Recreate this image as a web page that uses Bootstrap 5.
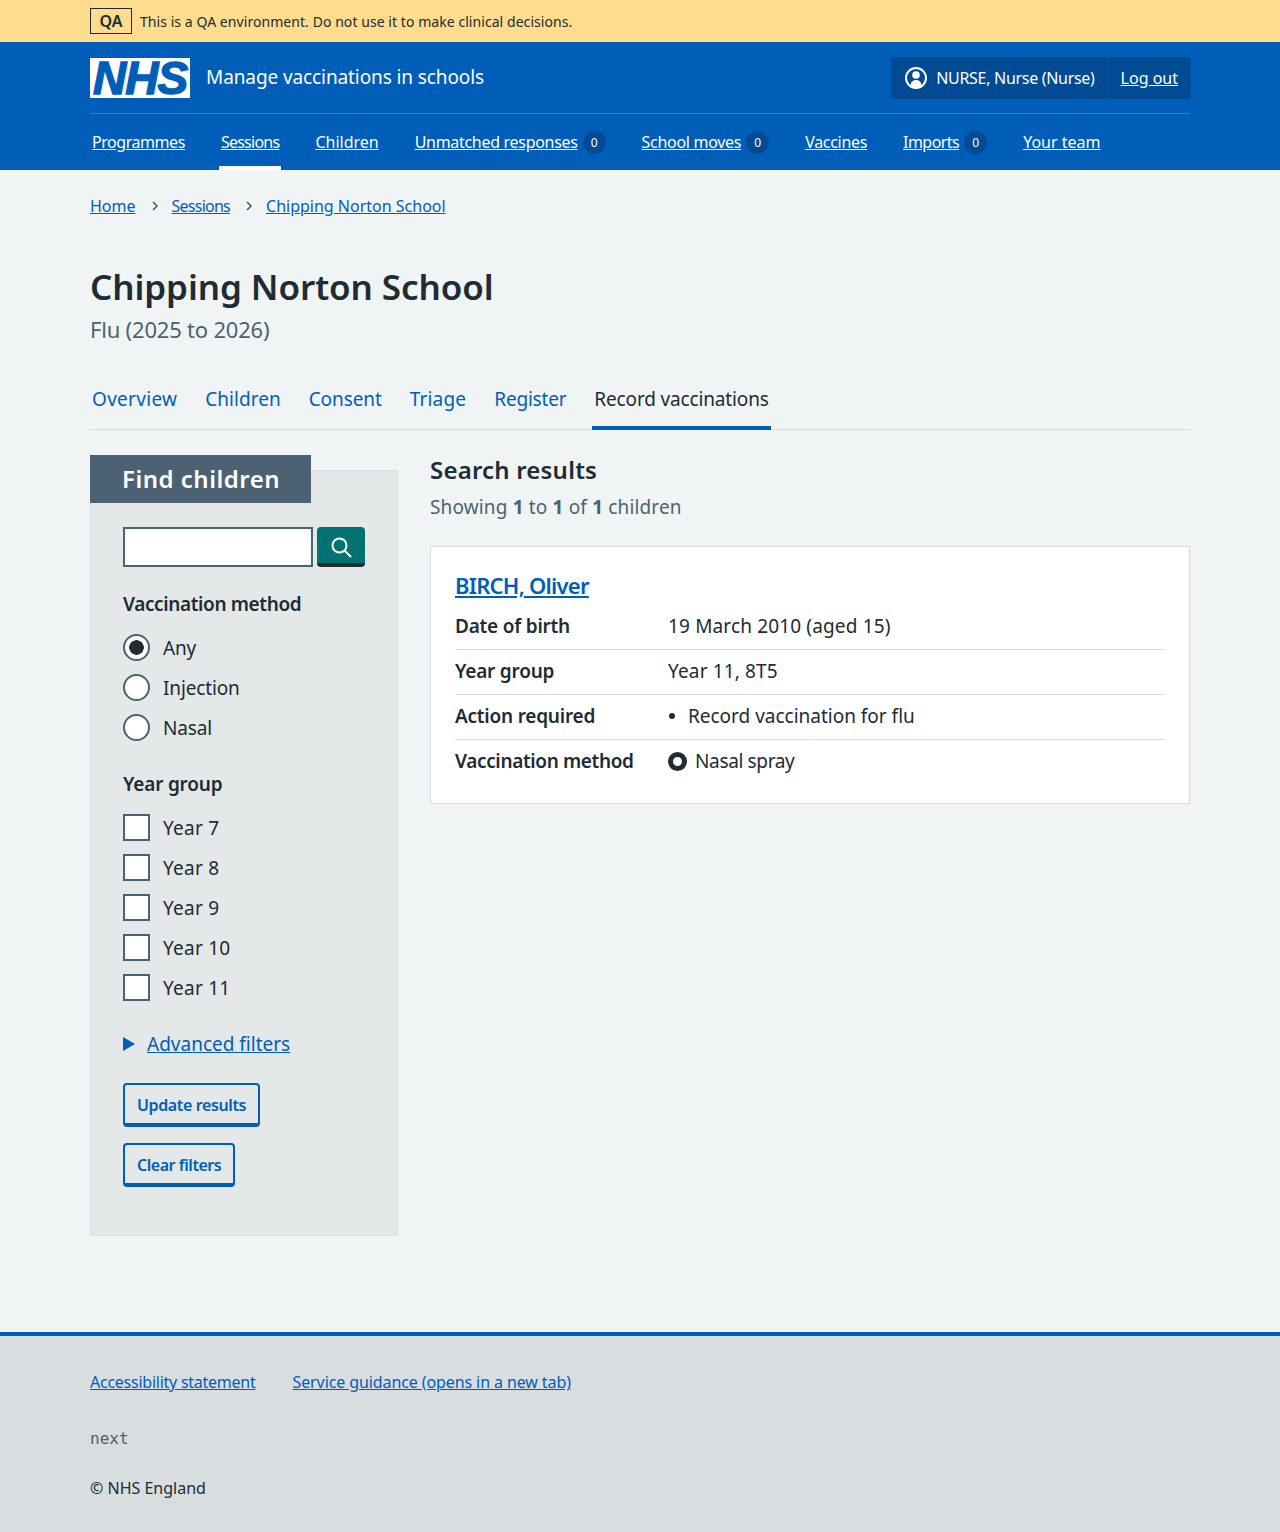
<!DOCTYPE html>
<html lang="en">
<head>
    <meta charset="UTF-8">
    <meta name="viewport" content="width=device-width, initial-scale=1.0">
    <title>Record vaccinations – Chipping Norton School</title>
    <link href="https://cdn.jsdelivr.net/npm/bootstrap@5.3.3/dist/css/bootstrap.min.css" rel="stylesheet">
    <style>
        body { font-family: "Noto Sans", sans-serif; background: #f0f4f5; color: #212b32; font-size: 19px; line-height: 28px; min-height: 1532px; }
        a { color: #005eb8; }
        .page-wrap { width: 1100px; margin: 0 auto; }

        .qa-banner { background: #ffdc8e; height: 42px; font-size: 14px; letter-spacing: .06px; }
        .qa-tag { border: 1px solid #212b32; font-weight: 600; font-size: 16px; width: 42px; height: 26px; line-height: 24px; text-align: center; }
        .qa-text { padding-top: 1px; }

        .site-header { background: #005eb8; color: #fff; height: 128px; }
        .site-header a { color: #fff; }
        .header-top { height: 72px; border-bottom: 1px solid #2c7dc9; padding-top: 16px; }
        .nhs-logo { background: #fff; color: #005eb8; width: 100px; height: 40px; font: italic 700 46px/40px "Liberation Sans", sans-serif; letter-spacing: -1px; text-align: center; -webkit-text-stroke: 1.4px #005eb8; }
        .service-name { font-size: 19px; margin: 5px 0 0 16px; letter-spacing: -.1px; }
        .user-box { background: #004b93; border-radius: 4px; height: 42px; margin-top: -1px; margin-right: -1px; font-size: 16px; }
        .user-name { padding: 0 12px 0 13px; border-right: 1px solid #00569f; height: 42px; letter-spacing: -.3px; column-gap: 8px; }
        .logout-link { padding: 0 13px; }
        .main-nav { height: 56px; font-size: 16px; letter-spacing: -.3px; }
        .main-nav a { display: block; padding: 14px 2px 0; height: 56px; margin-right: 32px; }
        .main-nav a:first-child { letter-spacing: -.45px; }
        .main-nav a.is-active { border-bottom: 4px solid #fff; }
        .main-nav a.narrow-word, .crumbs a.narrow-word { letter-spacing: -.75px; }
        .main-nav a:nth-child(3), .main-nav a:last-child { letter-spacing: 0; }
        .main-nav a:nth-child(7) { letter-spacing: -.55px; }
        .nav-count { display: inline-block; background: #004b93; border-radius: 50%; width: 23px; height: 23px; line-height: 23px; text-align: center; font-size: 12px; letter-spacing: 0; margin-left: 5px; vertical-align: 1px; }

        .crumbs { padding-top: 22px; font-size: 16px; line-height: 28px; }
        .crumb-sep { width: 36px; padding-left: 2px; display: flex; align-items: center; justify-content: center; }
        .page-title { font-size: 35px; line-height: 44px; font-weight: 600; margin: 45px 0 0; color: #212b32; letter-spacing: -.1px; }
        .page-sub { font-size: 22px; line-height: 32px; color: #4c6272; margin-top: 4px; letter-spacing: -.2px; }

        .tab-row { margin-top: 26px; border-bottom: 1px solid #d8dde0; height: 59px; }
        .tab-row a { display: block; padding: 14px 2px 0; height: 59px; margin-right: 24px; text-decoration: none; }
        .tab-row a:nth-child(1) { letter-spacing: .3px; }
        .tab-row a:nth-child(2) { letter-spacing: .03px; }
        .tab-row a:nth-child(3) { letter-spacing: -.1px; }
        .tab-row a:nth-child(4) { letter-spacing: .2px; }
        .tab-row a:nth-child(5) { letter-spacing: -.2px; }
        .tab-row a:nth-child(6) { letter-spacing: -.15px; }
        .tab-row a.is-active { color: #212b32; border-bottom: 4px solid #005eb8; }

        .content-cols { column-gap: 32px; }
        .filter-col { width: 308px; flex: none; margin-top: 40px; position: relative; background: #e4e8e9; border: 1px solid #d8dde0; height: 766px; padding: 56px 32px 0; }
        .filter-head { position: absolute; left: -1px; top: -16px; background: #4c6272; color: #fff; height: 48px; width: 221px; padding-left: 32px; font-size: 24px; line-height: 48px; font-weight: 600; margin: 0; letter-spacing: .5px; }
        .search-row { margin-bottom: 23px; }
        .search-input { width: 190px; height: 40px; border: 2px solid #4c6272; background: #fff; border-radius: 0; padding: 0 8px; }
        .search-btn { width: 48px; height: 40px; background: #007272; border: 0; border-bottom: 4px solid #212b32; border-radius: 4px; margin-left: 4px; padding: 0; }
        .filter-legend { font-weight: 600; font-size: 19px; line-height: 28px; margin: 0 0 10px; letter-spacing: -.38px; }
        .filter-set { margin-bottom: 22px; }
        .filter-set + .filter-set .filter-legend { letter-spacing: -.2px; }
        .filter-opt { display: flex; align-items: center; height: 40px; margin: 0; padding: 0; letter-spacing: -.15px; }
        .filter-set + .filter-set .filter-opt { letter-spacing: .25px; }
        .filter-opt .form-check-input { width: 27px; height: 27px; margin: -2px 13px 0 0; border: 2px solid #4c6272; float: none; flex: none; background-image: none; box-shadow: none; }
        .filter-opt .form-check-input[type=checkbox] { border-radius: 0; }
        .filter-opt .form-check-input:checked[type=radio] { background-color: #fff; background-image: radial-gradient(circle, #212b32 0 7px, transparent 7.5px); }
        .adv-filters { margin-top: 22px; }
        .adv-arrow { width: 0; height: 0; border-left: 12px solid #005eb8; border-top: 7px solid transparent; border-bottom: 7px solid transparent; margin-right: 12px; }
        .outline-btn { display: block; width: fit-content; border: 2px solid #005eb8; border-bottom-width: 4px; border-radius: 4px; background: transparent; color: #005eb8; font-weight: 600; font-size: 16px; line-height: 24px; padding: 8px 12px 6px; height: 44px; letter-spacing: -.38px; }
        .outline-btn + .outline-btn { letter-spacing: -.46px; }
        .btn-first { margin-top: 25px; }

        .results-col { flex: 1; margin-top: 24px; }
        .results-title { font-size: 24px; line-height: 32px; font-weight: 600; margin: 0; letter-spacing: .2px; }
        .results-count { color: #4c6272; margin: 7px 0 25px; letter-spacing: .15px; }
        .result-panel { background: #fff; border: 1px solid #d8dde0; height: 258px; padding: 22px 24px 0; }
        .result-name { font-size: 22px; line-height: 32px; font-weight: 600; margin: 0 0 4px; letter-spacing: -.75px; }
        .result-row { display: flex; height: 45px; padding-top: 7px; border-bottom: 1px solid #d8dde0; letter-spacing: .15px; }
        .result-row:last-child { border-bottom: 0; }
        .result-key { width: 213px; font-weight: 600; flex: none; letter-spacing: -.22px; }
        .result-row:last-child .result-key { letter-spacing: -.36px; }
        .result-bullet { width: 6px; height: 6px; border-radius: 50%; background: #212b32; margin: 11px 13px 0 1px; }
        .result-bullet + div { letter-spacing: -.01px; }
        .result-ring { width: 19px; height: 19px; border: 5px solid #212b32; border-radius: 50%; margin: 5px 8px 0 0; }
        .result-ring + div { letter-spacing: -.35px; }

        .site-footer { position: absolute; top: 1332px; left: 0; right: 0; height: 200px; background: #d8dde0; border-top: 4px solid #005eb8; font-size: 16px; }
        .foot-links { padding-top: 32px; letter-spacing: -.1px; }
        .foot-links a { margin-right: 37px; }
        .foot-links a:first-child { letter-spacing: -.25px; }
        .foot-version { font-family: "DejaVu Sans Mono", monospace; font-size: 16px; color: #4c6272; margin-top: 29px; }
        .foot-copy { margin-top: 21px; }
    </style>
</head>
<body>

<div class="qa-banner">
    <div class="page-wrap d-flex align-items-center h-100">
        <span class="qa-tag me-2">QA</span>
        <span class="qa-text">This is a QA environment. Do not use it to make clinical decisions.</span>
    </div>
</div>

<header class="site-header">
    <div class="page-wrap">
        <div class="header-top d-flex justify-content-between">
            <div class="d-flex align-items-start">
                <span class="nhs-logo">NHS</span>
                <span class="service-name">Manage vaccinations in schools</span>
            </div>
            <div class="user-box d-flex align-items-center">
                <span class="user-name d-flex align-items-center">
                    <svg width="24" height="24" viewBox="0 0 24 24"><circle cx="12" cy="12" r="10" fill="none" stroke="#fff" stroke-width="2"/><circle cx="12" cy="9" r="3.8" fill="#fff"/><path d="M6.5 20c0-4 2.5-6 5.5-6s5.5 2 5.5 6a10 10 0 0 1-11 0z" fill="#fff"/></svg>
                    NURSE, Nurse (Nurse)
                </span>
                <a class="logout-link" href="#">Log out</a>
            </div>
        </div>
        <nav class="main-nav d-flex">
            <a href="#">Programmes</a>
            <a class="is-active narrow-word" href="#">Sessions</a>
            <a href="#">Children</a>
            <a href="#">Unmatched responses<span class="nav-count">0</span></a>
            <a href="#">School moves<span class="nav-count">0</span></a>
            <a href="#">Vaccines</a>
            <a href="#">Imports<span class="nav-count">0</span></a>
            <a href="#">Your team</a>
        </nav>
    </div>
</header>

<main class="page-wrap">
    <div class="crumbs d-flex">
        <a href="#">Home</a>
        <span class="crumb-sep"><svg width="8" height="12" viewBox="0 0 8 12" fill="none" stroke="#425563" stroke-width="1.5"><path d="M2 2l4 4-4 4"/></svg></span>
        <a class="narrow-word" href="#">Sessions</a>
        <span class="crumb-sep"><svg width="8" height="12" viewBox="0 0 8 12" fill="none" stroke="#425563" stroke-width="1.5"><path d="M2 2l4 4-4 4"/></svg></span>
        <a href="#">Chipping Norton School</a>
    </div>

    <h1 class="page-title">Chipping Norton School</h1>
    <div class="page-sub">Flu (2025 to 2026)</div>

    <nav class="tab-row d-flex">
        <a href="#">Overview</a>
        <a href="#">Children</a>
        <a href="#">Consent</a>
        <a href="#">Triage</a>
        <a href="#">Register</a>
        <a class="is-active" href="#">Record vaccinations</a>
    </nav>

    <div class="d-flex align-items-start content-cols">
        <form class="filter-col">
            <h2 class="filter-head">Find children</h2>
            <div class="d-flex search-row">
                <input class="search-input" type="text" aria-label="Search">
                <button class="search-btn" type="button" aria-label="Search">
                    <svg width="24" height="24" viewBox="0 0 24 24" fill="none" stroke="#fff" stroke-width="2"><circle cx="10.5" cy="10.5" r="7"/><path d="M15.5 15.5l6 6" stroke-linecap="round"/></svg>
                </button>
            </div>

            <fieldset class="filter-set">
                <legend class="filter-legend">Vaccination method</legend>
                <label class="filter-opt"><input class="form-check-input" type="radio" name="method" checked>Any</label>
                <label class="filter-opt"><input class="form-check-input" type="radio" name="method">Injection</label>
                <label class="filter-opt"><input class="form-check-input" type="radio" name="method">Nasal</label>
            </fieldset>

            <fieldset class="filter-set">
                <legend class="filter-legend">Year group</legend>
                <label class="filter-opt"><input class="form-check-input" type="checkbox">Year 7</label>
                <label class="filter-opt"><input class="form-check-input" type="checkbox">Year 8</label>
                <label class="filter-opt"><input class="form-check-input" type="checkbox">Year 9</label>
                <label class="filter-opt"><input class="form-check-input" type="checkbox">Year 10</label>
                <label class="filter-opt"><input class="form-check-input" type="checkbox">Year 11</label>
            </fieldset>

            <div class="adv-filters d-flex align-items-center">
                <span class="adv-arrow"></span>
                <a href="#">Advanced filters</a>
            </div>

            <button class="outline-btn btn-first" type="button">Update results</button>
            <button class="outline-btn mt-3" type="button">Clear filters</button>
        </form>

        <section class="results-col">
            <h2 class="results-title">Search results</h2>
            <p class="results-count">Showing <b>1</b> to <b>1</b> of <b>1</b> children</p>
            <div class="result-panel">
                <h3 class="result-name"><a href="#">BIRCH, Oliver</a></h3>
                <div class="result-row"><div class="result-key">Date of birth</div><div>19 March 2010 (aged 15)</div></div>
                <div class="result-row"><div class="result-key">Year group</div><div>Year 11, 8T5</div></div>
                <div class="result-row"><div class="result-key">Action required</div><span class="result-bullet"></span><div>Record vaccination for flu</div></div>
                <div class="result-row"><div class="result-key">Vaccination method</div><span class="result-ring"></span><div>Nasal spray</div></div>
            </div>
        </section>
    </div>
</main>

<footer class="site-footer">
    <div class="page-wrap">
        <div class="foot-links"><a href="#">Accessibility statement</a><a href="#">Service guidance (opens in a new tab)</a></div>
        <div class="foot-version">next</div>
        <div class="foot-copy">© NHS England</div>
    </div>
</footer>

<script src="https://cdn.jsdelivr.net/npm/bootstrap@5.3.3/dist/js/bootstrap.bundle.min.js"></script>
</body>
</html>
